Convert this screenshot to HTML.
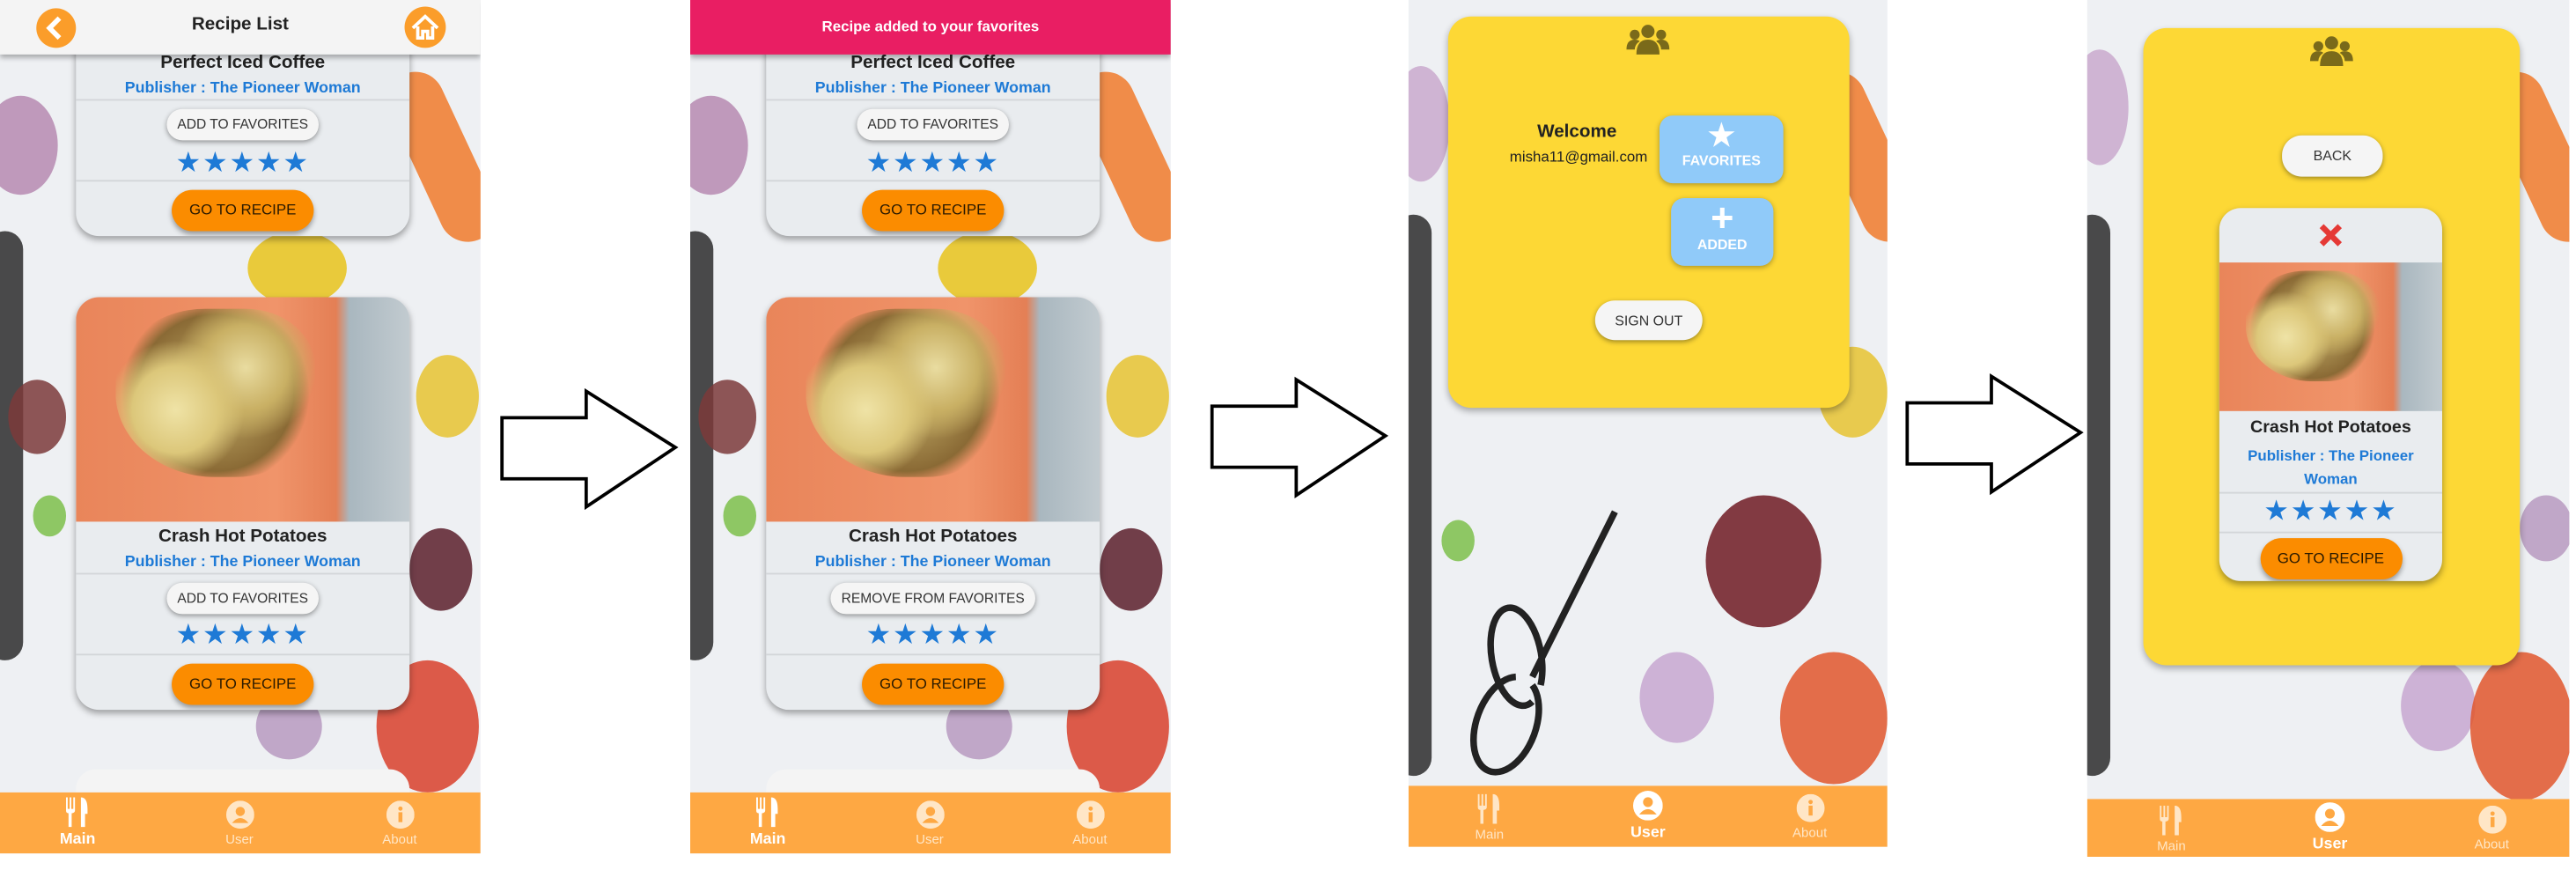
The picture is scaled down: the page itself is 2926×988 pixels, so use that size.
<!DOCTYPE html>
<html><head><meta charset="utf-8"><style>
*{box-sizing:border-box;margin:0;padding:0}
html,body{width:2926px;height:988px;overflow:hidden;background:#fff;font-family:"Liberation Sans",Arial,sans-serif}
#s{position:absolute;left:0;top:0;width:1560px;height:527px;transform-origin:0 0;transform:scale(1.8756,1.8748)}
.a{position:absolute}
.ph{position:absolute;overflow:hidden;background:#eef0f3}
.bg i{position:absolute;border-radius:50%;display:block;opacity:.85}
.card{position:absolute;background:#e9ecef;box-shadow:0 2px 4px rgba(0,0,0,.35);overflow:hidden}
.t{position:absolute;left:0;right:0;text-align:center;font-weight:bold;color:#222;font-size:11px}
.p{position:absolute;left:0;right:0;text-align:center;font-weight:bold;color:#1e7ad6;font-size:9.5px}
.ln{position:absolute;left:0;right:0;height:1px;background:#d3d6d9}
.btn{position:absolute;left:50%;transform:translateX(-50%);background:#f5f5f5;border-radius:10px;box-shadow:0 1px 3px rgba(0,0,0,.4);font-size:8.3px;color:#333;text-align:center;white-space:nowrap}
.go{position:absolute;left:50%;transform:translateX(-50%);background:#fb8c00;border-radius:13px;box-shadow:0 2px 3px rgba(0,0,0,.35);font-size:9px;color:#2a1a00;text-align:center}
.st{position:absolute;left:0;right:0;text-align:center;color:#1e7ad6;font-size:17px;letter-spacing:1px;line-height:1}
.img{position:absolute;left:0;right:0;overflow:hidden;background:linear-gradient(90deg,#e9855a 0,#f0946a 60%,#e47f55 78%,#a9b7bf 82%,#c2cbd0 100%)}
.img:before{content:"";position:absolute;left:12%;top:5%;width:60%;height:75%;border-radius:45% 35% 40% 50%;background:radial-gradient(circle at 30% 60%,#efe3a6 0,#dcc77a 25%,transparent 40%),radial-gradient(circle at 65% 35%,#e9dca0 0,#c9b064 25%,transparent 42%),radial-gradient(circle at 50% 50%,#c9b56e 0,#8a6a35 60%,transparent 72%)}
.nav{position:absolute;left:0;right:0;background:#fea843}
.ni{position:absolute;text-align:center;width:60px;color:#ffe6c6;font-size:8px}
.ni svg{display:block;margin:0 auto 2px}
.on{color:#fff;font-weight:bold;font-size:9.5px}
.yc{position:absolute;background:#fdd835;border-radius:14px;box-shadow:0 2px 4px rgba(0,0,0,.3)}
</style></head><body><div id="s">

<!-- PANEL 1 -->
<div class="ph" style="left:0;top:0;width:291px;height:517px">
 <div class="bg">
  <i style="left:-10px;top:58px;width:45px;height:60px;background:#b68ab0"></i>
  <i style="left:250px;top:40px;width:35px;height:110px;border-radius:20px;background:#f07a2a;transform:rotate(-25deg)"></i>
  <i style="left:150px;top:140px;width:60px;height:45px;background:#e8c31a"></i>
  <i style="left:-8px;top:140px;width:22px;height:260px;border-radius:12px;background:#2b2b2b"></i>
  <i style="left:252px;top:215px;width:38px;height:50px;background:#e6c330"></i>
  <i style="left:5px;top:230px;width:35px;height:45px;background:#7b3a3a"></i>
  <i style="left:228px;top:400px;width:62px;height:80px;background:#d8402a"></i>
  <i style="left:155px;top:420px;width:40px;height:40px;background:#b79ac0"></i>
  <i style="left:248px;top:320px;width:38px;height:50px;background:#5a1e2a"></i>
  <i style="left:20px;top:300px;width:20px;height:25px;background:#7cbf4a"></i>
 </div>
 <div class="a" style="left:46px;top:466px;width:202px;height:20px;background:#f4f4f4;border-radius:12px 12px 0 0"></div>
 <div class="card" style="left:46px;top:20px;width:202px;height:123px;border-radius:0 0 14px 14px">
  <div class="t" style="top:12px">Perfect Iced Coffee</div>
  <div class="p" style="top:28px">Publisher : The Pioneer Woman</div>
  <div class="ln" style="top:40px"></div>
  <div class="btn" style="top:46px;width:92px;height:19px;line-height:19px">ADD TO FAVORITES</div>
  <div class="st" style="top:70px">★★★★★</div>
  <div class="ln" style="top:89px"></div>
  <div class="go" style="top:95px;width:86px;height:25px;line-height:25px">GO TO RECIPE</div>
 </div>
 <div class="card" style="left:46px;top:180px;width:202px;height:250px;border-radius:14px">
  <div class="img" style="top:0;height:136px"></div>
  <div class="t" style="top:139px">Crash Hot Potatoes</div>
  <div class="p" style="top:155px">Publisher : The Pioneer Woman</div>
  <div class="ln" style="top:167px"></div>
  <div class="btn" style="top:173px;width:92px;height:19px;line-height:19px">ADD TO FAVORITES</div>
  <div class="st" style="top:196px">★★★★★</div>
  <div class="ln" style="top:216px"></div>
  <div class="go" style="top:222px;width:86px;height:25px;line-height:25px">GO TO RECIPE</div>
 </div>
 <div class="a" style="left:0;top:0;width:291px;height:33px;background:#f4f4f4;box-shadow:0 2px 3px rgba(0,0,0,.3)">
  <div class="a" style="left:22px;top:5px;width:24px;height:24px;border-radius:50%;background:#fb9d2a"><svg width="24" height="24" viewBox="0 0 24 24"><path d="M14 6 L8 12 L14 18" fill="none" stroke="#fff" stroke-width="3"/></svg></div>
  <div class="a" style="left:0;right:0;top:9px;text-align:center;font-size:11px;font-weight:bold;color:#222">Recipe List</div>
  <div class="a" style="left:245px;top:4px;width:25px;height:25px;border-radius:50%;background:#fb9d2a"><svg width="25" height="25" viewBox="0 0 25 25"><path d="M5 13 L12.5 6 L20 13 M8 12 V19 H11 V15 H14 V19 H17 V12" fill="none" stroke="#fff" stroke-width="2"/></svg></div>
 </div>
 <div class="nav" style="top:480px;height:37px">
  <div class="ni on" style="left:17px;top:3px"><svg width="16" height="18" viewBox="0 0 16 18"><path d="M2 0v7h1.2V0h1v7h1.2V0h1v8c0 1-1 1.6-2 1.6V18H2.5V9.6C1.5 9.6 1 9 1 8V0zM10 0c3 0 4 3 4 7v3h-1.5v8h-2.5z" fill="#fff"/></svg>Main</div>
  <div class="ni" style="left:115px;top:5px"><svg width="17" height="17" viewBox="0 0 17 17"><circle cx="8.5" cy="8.5" r="8.5" fill="#ffe6c6"/><circle cx="8.5" cy="6.5" r="2.8" fill="#fea843"/><path d="M3.5 13.5 q5-6 10 0" fill="#fea843"/></svg>User</div>
  <div class="ni" style="left:212px;top:5px"><svg width="17" height="17" viewBox="0 0 17 17"><circle cx="8.5" cy="8.5" r="8.5" fill="#ffe6c6"/><rect x="7.3" y="7" width="2.4" height="6" fill="#fea843"/><circle cx="8.5" cy="4.8" r="1.3" fill="#fea843"/></svg>About</div>
 </div>
</div>

<svg class="a" style="left:300px;top:233px" width="115" height="80"><polygon points="4,20 55,20 55,4 109,38 55,74 55,57 4,57" fill="#fff" stroke="#000" stroke-width="2"/></svg>

<!-- PANEL 2 -->
<div class="ph" style="left:418px;top:0;width:291px;height:517px">
 <div class="bg">
  <i style="left:-10px;top:58px;width:45px;height:60px;background:#b68ab0"></i>
  <i style="left:250px;top:40px;width:35px;height:110px;border-radius:20px;background:#f07a2a;transform:rotate(-25deg)"></i>
  <i style="left:150px;top:140px;width:60px;height:45px;background:#e8c31a"></i>
  <i style="left:-8px;top:140px;width:22px;height:260px;border-radius:12px;background:#2b2b2b"></i>
  <i style="left:252px;top:215px;width:38px;height:50px;background:#e6c330"></i>
  <i style="left:5px;top:230px;width:35px;height:45px;background:#7b3a3a"></i>
  <i style="left:228px;top:400px;width:62px;height:80px;background:#d8402a"></i>
  <i style="left:155px;top:420px;width:40px;height:40px;background:#b79ac0"></i>
  <i style="left:248px;top:320px;width:38px;height:50px;background:#5a1e2a"></i>
  <i style="left:20px;top:300px;width:20px;height:25px;background:#7cbf4a"></i>
 </div>
 <div class="a" style="left:46px;top:466px;width:202px;height:20px;background:#f4f4f4;border-radius:12px 12px 0 0"></div>
 <div class="card" style="left:46px;top:20px;width:202px;height:123px;border-radius:0 0 14px 14px">
  <div class="t" style="top:12px">Perfect Iced Coffee</div>
  <div class="p" style="top:28px">Publisher : The Pioneer Woman</div>
  <div class="ln" style="top:40px"></div>
  <div class="btn" style="top:46px;width:92px;height:19px;line-height:19px">ADD TO FAVORITES</div>
  <div class="st" style="top:70px">★★★★★</div>
  <div class="ln" style="top:89px"></div>
  <div class="go" style="top:95px;width:86px;height:25px;line-height:25px">GO TO RECIPE</div>
 </div>
 <div class="card" style="left:46px;top:180px;width:202px;height:250px;border-radius:14px">
  <div class="img" style="top:0;height:136px"></div>
  <div class="t" style="top:139px">Crash Hot Potatoes</div>
  <div class="p" style="top:155px">Publisher : The Pioneer Woman</div>
  <div class="ln" style="top:167px"></div>
  <div class="btn" style="top:173px;width:124px;height:19px;line-height:19px">REMOVE FROM FAVORITES</div>
  <div class="st" style="top:196px">★★★★★</div>
  <div class="ln" style="top:216px"></div>
  <div class="go" style="top:222px;width:86px;height:25px;line-height:25px">GO TO RECIPE</div>
 </div>
 <div class="a" style="left:0;top:0;width:291px;height:33px;background:#e91e63;box-shadow:0 2px 3px rgba(0,0,0,.3);color:#fff;font-weight:bold;font-size:9px;text-align:center;line-height:33px">Recipe added to your favorites</div>
 <div class="nav" style="top:480px;height:37px">
  <div class="ni on" style="left:17px;top:3px"><svg width="16" height="18" viewBox="0 0 16 18"><path d="M2 0v7h1.2V0h1v7h1.2V0h1v8c0 1-1 1.6-2 1.6V18H2.5V9.6C1.5 9.6 1 9 1 8V0zM10 0c3 0 4 3 4 7v3h-1.5v8h-2.5z" fill="#fff"/></svg>Main</div>
  <div class="ni" style="left:115px;top:5px"><svg width="17" height="17" viewBox="0 0 17 17"><circle cx="8.5" cy="8.5" r="8.5" fill="#ffe6c6"/><circle cx="8.5" cy="6.5" r="2.8" fill="#fea843"/><path d="M3.5 13.5 q5-6 10 0" fill="#fea843"/></svg>User</div>
  <div class="ni" style="left:212px;top:5px"><svg width="17" height="17" viewBox="0 0 17 17"><circle cx="8.5" cy="8.5" r="8.5" fill="#ffe6c6"/><rect x="7.3" y="7" width="2.4" height="6" fill="#fea843"/><circle cx="8.5" cy="4.8" r="1.3" fill="#fea843"/></svg>About</div>
 </div>
</div>

<svg class="a" style="left:730px;top:226px" width="115" height="80"><polygon points="4,20 55,20 55,4 109,38 55,74 55,57 4,57" fill="#fff" stroke="#000" stroke-width="2"/></svg>

<!-- PANEL 3 -->
<div class="ph" style="left:853px;top:0;width:290px;height:513px">
 <div class="bg">
  <i style="left:-10px;top:40px;width:35px;height:70px;background:#c9a9cc"></i>
  <i style="left:258px;top:40px;width:35px;height:110px;border-radius:20px;background:#f07a2a;transform:rotate(-25deg)"></i>
  <i style="left:-8px;top:130px;width:22px;height:340px;border-radius:12px;background:#2b2b2b"></i>
  <i style="left:248px;top:210px;width:42px;height:55px;background:#e6c330"></i>
  <i style="left:180px;top:300px;width:70px;height:80px;background:#6e1a22"></i>
  <i style="left:140px;top:395px;width:45px;height:55px;background:#c7a7d0"></i>
  <i style="left:225px;top:395px;width:65px;height:80px;background:#e0562c"></i>
  <i style="left:20px;top:315px;width:20px;height:25px;background:#7cbf4a"></i>
 </div>
 <svg class="a" style="left:35px;top:300px" width="110" height="180"><path d="M90 10 L40 110 M30 110 a18 30 20 1 0 10 5 M45 115 a15 30 -10 1 0 -5 10" stroke="#222" stroke-width="4" fill="none"/></svg>
 <div class="yc" style="left:24px;top:10px;width:243px;height:237px">
  <svg class="a" style="left:107px;top:3px" width="28" height="22" viewBox="0 0 28 22"><circle cx="14" cy="6" r="4" fill="#7a6a1a"/><circle cx="6" cy="8" r="3" fill="#7a6a1a"/><circle cx="22" cy="8" r="3" fill="#7a6a1a"/><path d="M7 20 q0-9 7-9 q7 0 7 9z M1 17 q0-6 5-6 q2 0 3 1 q-3 2 -3 5z M27 17 q0-6-5-6 q-2 0-3 1 q3 2 3 5z" fill="#7a6a1a"/></svg>
  <div class="a" style="left:33px;top:64px;width:90px;text-align:center;font-weight:bold;font-size:11px;color:#222">Welcome</div>
  <div class="a" style="left:26px;top:80px;width:106px;text-align:center;font-size:9px;color:#222">misha11@gmail.com</div>
  <div class="a" style="left:128px;top:60px;width:75px;height:41px;border-radius:8px;background:#90caf9;box-shadow:0 1px 3px rgba(0,0,0,.3);color:#fff;font-weight:bold;font-size:8.5px;text-align:center"><div style="font-size:18px;line-height:20px;margin-top:2px">★</div>FAVORITES</div>
  <div class="a" style="left:135px;top:110px;width:62px;height:41px;border-radius:8px;background:#90caf9;box-shadow:0 1px 3px rgba(0,0,0,.3);color:#fff;font-weight:bold;font-size:8.5px;text-align:center"><div style="font-size:24px;line-height:20px;margin-top:3px">+</div>ADDED</div>
  <div class="a" style="left:89px;top:172px;width:65px;height:24px;border-radius:12px;background:#f5f5f5;box-shadow:0 1px 3px rgba(0,0,0,.4);font-size:8.5px;color:#333;text-align:center;line-height:24px">SIGN OUT</div>
 </div>
 <div class="nav" style="top:476px;height:37px">
  <div class="ni" style="left:19px;top:5px"><svg width="16" height="18" viewBox="0 0 16 18"><path d="M2 0v7h1.2V0h1v7h1.2V0h1v8c0 1-1 1.6-2 1.6V18H2.5V9.6C1.5 9.6 1 9 1 8V0zM10 0c3 0 4 3 4 7v3h-1.5v8h-2.5z" fill="#ffe6c6"/></svg>Main</div>
  <div class="ni on" style="left:115px;top:3px"><svg width="18" height="18" viewBox="0 0 17 17"><circle cx="8.5" cy="8.5" r="8.5" fill="#fff"/><circle cx="8.5" cy="6.5" r="2.8" fill="#fea843"/><path d="M3.5 13.5 q5-6 10 0" fill="#fea843"/></svg>User</div>
  <div class="ni" style="left:213px;top:5px"><svg width="17" height="17" viewBox="0 0 17 17"><circle cx="8.5" cy="8.5" r="8.5" fill="#ffe6c6"/><rect x="7.3" y="7" width="2.4" height="6" fill="#fea843"/><circle cx="8.5" cy="4.8" r="1.3" fill="#fea843"/></svg>About</div>
 </div>
</div>

<svg class="a" style="left:1151px;top:224px" width="115" height="80"><polygon points="4,20 55,20 55,4 109,38 55,74 55,57 4,57" fill="#fff" stroke="#000" stroke-width="2"/></svg>

<!-- PANEL 4 -->
<div class="ph" style="left:1264px;top:0;width:292px;height:519px">
 <div class="bg">
  <i style="left:-10px;top:30px;width:35px;height:70px;background:#c9a9cc"></i>
  <i style="left:258px;top:40px;width:35px;height:110px;border-radius:20px;background:#f07a2a;transform:rotate(-25deg)"></i>
  <i style="left:-8px;top:130px;width:22px;height:340px;border-radius:12px;background:#2b2b2b"></i>
  <i style="left:190px;top:400px;width:45px;height:55px;background:#c7a7d0"></i>
  <i style="left:232px;top:395px;width:62px;height:90px;background:#e0562c"></i>
  <i style="left:262px;top:300px;width:32px;height:40px;background:#b79ac0"></i>
 </div>
 <div class="yc" style="left:34px;top:17px;width:228px;height:386px">
  <svg class="a" style="left:100px;top:3px" width="28" height="22" viewBox="0 0 28 22"><circle cx="14" cy="6" r="4" fill="#7a6a1a"/><circle cx="6" cy="8" r="3" fill="#7a6a1a"/><circle cx="22" cy="8" r="3" fill="#7a6a1a"/><path d="M7 20 q0-9 7-9 q7 0 7 9z M1 17 q0-6 5-6 q2 0 3 1 q-3 2 -3 5z M27 17 q0-6-5-6 q-2 0-3 1 q3 2 3 5z" fill="#7a6a1a"/></svg>
  <div class="a" style="left:84px;top:65px;width:61px;height:25px;border-radius:12px;background:#f5f5f5;box-shadow:0 1px 3px rgba(0,0,0,.4);font-size:8.5px;color:#333;text-align:center;line-height:25px">BACK</div>
  <div class="card" style="left:46px;top:109px;width:135px;height:226px;border-radius:13px">
   <svg class="a" style="left:60px;top:9px" width="15" height="15" viewBox="0 0 15 15"><path d="M2 2 L13 13 M13 2 L2 13" stroke="#e53935" stroke-width="3.5"/></svg>
   <div class="img" style="top:33px;height:90px"></div>
   <div class="t" style="top:127px;font-size:10.5px">Crash Hot Potatoes</div>
   <div class="p" style="top:143px;font-size:9px;line-height:14px">Publisher : The Pioneer<br>Woman</div>
   <div class="ln" style="top:172px"></div>
   <div class="st" style="top:175px">★★★★★</div>
   <div class="ln" style="top:196px"></div>
   <div class="go" style="top:200px;width:86px;height:25px;line-height:25px">GO TO RECIPE</div>
  </div>
 </div>
 <div class="nav" style="top:484px;height:35px">
  <div class="ni" style="left:21px;top:4px"><svg width="16" height="18" viewBox="0 0 16 18"><path d="M2 0v7h1.2V0h1v7h1.2V0h1v8c0 1-1 1.6-2 1.6V18H2.5V9.6C1.5 9.6 1 9 1 8V0zM10 0c3 0 4 3 4 7v3h-1.5v8h-2.5z" fill="#ffe6c6"/></svg>Main</div>
  <div class="ni on" style="left:117px;top:2px"><svg width="18" height="18" viewBox="0 0 17 17"><circle cx="8.5" cy="8.5" r="8.5" fill="#fff"/><circle cx="8.5" cy="6.5" r="2.8" fill="#fea843"/><path d="M3.5 13.5 q5-6 10 0" fill="#fea843"/></svg>User</div>
  <div class="ni" style="left:215px;top:4px"><svg width="17" height="17" viewBox="0 0 17 17"><circle cx="8.5" cy="8.5" r="8.5" fill="#ffe6c6"/><rect x="7.3" y="7" width="2.4" height="6" fill="#fea843"/><circle cx="8.5" cy="4.8" r="1.3" fill="#fea843"/></svg>About</div>
 </div>
</div>

</div></body></html>
